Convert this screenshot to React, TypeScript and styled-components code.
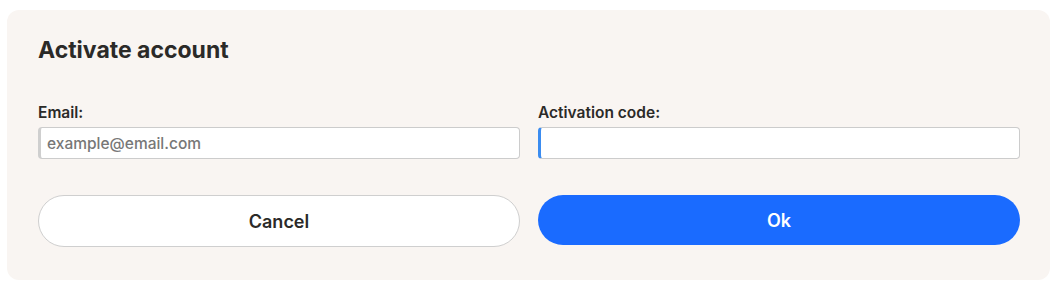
import React from 'react'
import styled, { createGlobalStyle } from 'styled-components'

const GlobalStyle = createGlobalStyle`
  * {
    box-sizing: border-box;
  }

  body {
    margin: 0;
    background: #ffffff;
    font-family: Inter, "Noto Sans", sans-serif;
  }
`

const Page = styled.div`
  padding: 10px 8px 0 7px;
`

const Panel = styled.div`
  background: #f9f5f2;
  border-radius: 12px;
  padding: 26px 30px 33px 31px;
`

const Title = styled.h2`
  margin: 0;
  font-size: 23px;
  font-weight: 700;
  color: #2b2a28;
  line-height: 28px;
`

const Fields = styled.div`
  display: grid;
  grid-template-columns: 1fr 1fr;
  column-gap: 18px;
  margin-top: 40px;
`

const Field = styled.label`
  display: flex;
  flex-direction: column;
  gap: 5px;
`

const Label = styled.span`
  font-size: 15.5px;
  font-weight: 600;
  color: #2b2a28;
  line-height: 18px;
`

const Input = styled.input<{ $focused?: boolean }>`
  height: 32px;
  width: 100%;
  border: 1px solid #cccccc;
  border-left: 3px solid ${p => (p.$focused ? '#3b8cf0' : '#cfcfcf')};
  border-radius: 4px;
  background: #ffffff;
  padding: 0 8px 0 6px;
  font-family: Inter, "Noto Sans", sans-serif;
  font-size: 15.5px;
  font-weight: 500;
  color: #2b2a28;
  outline: none;

  &::placeholder {
    color: #777777;
  }
`

const Actions = styled.div`
  display: grid;
  grid-template-columns: 1fr 1fr;
  column-gap: 18px;
  align-items: start;
  margin-top: 36px;
`

const Button = styled.button<{ $primary?: boolean }>`
  height: ${p => (p.$primary ? '50px' : '52px')};
  border-radius: 26px;
  border: ${p => (p.$primary ? 'none' : '1px solid #cfcfcf')};
  background: ${p => (p.$primary ? '#1a6bff' : '#ffffff')};
  color: ${p => (p.$primary ? '#ffffff' : '#2b2a28')};
  font-family: Inter, "Noto Sans", sans-serif;
  font-size: 18px;
  font-weight: 600;
  cursor: pointer;
`

export default function App() {
  return (
    <>
      <GlobalStyle />
      <Page>
        <Panel>
          <Title>Activate account</Title>
          <Fields>
            <Field>
              <Label>Email:</Label>
              <Input type="email" placeholder="example@email.com" />
            </Field>
            <Field>
              <Label>Activation code:</Label>
              <Input type="text" $focused />
            </Field>
          </Fields>
          <Actions>
            <Button>Cancel</Button>
            <Button $primary>Ok</Button>
          </Actions>
        </Panel>
      </Page>
    </>
  )
}
